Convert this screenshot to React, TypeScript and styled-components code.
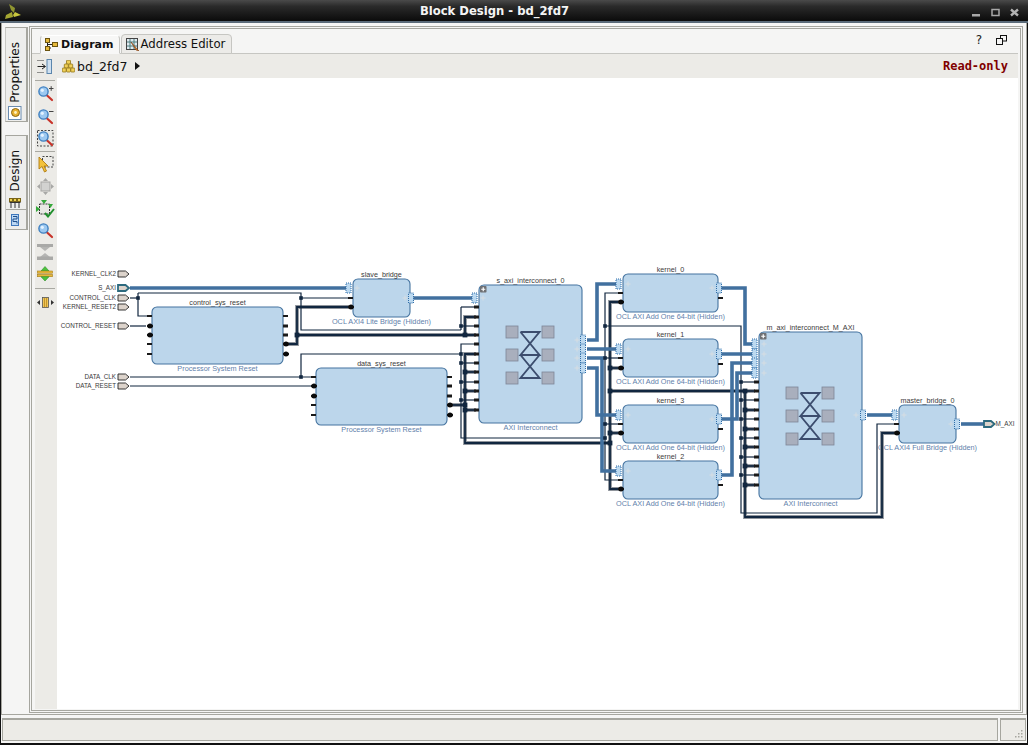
import React from "react";
import styled, { createGlobalStyle } from "styled-components";

const Global = createGlobalStyle`
  html, body { margin: 0; padding: 0; width: 1028px; height: 745px; overflow: hidden; background: #000; }
  #root { width: 1028px; height: 745px; }
`;

const Window = styled.div`
  box-sizing: border-box; width: 1028px; height: 745px; display: flex; flex-direction: column;
  background: #f5f5f4; border: 1px solid #111; border-top: 0; border-bottom-width: 2px;
  font-family: "DejaVu Sans", sans-serif; color: #111;
`;
const TitleBar = styled.div`
  position: relative; flex: none; height: 21px; margin: 0 -1px; display: flex; align-items: center; justify-content: center;
  background: linear-gradient(#4a4a4a 0, #2a2a2a 30%, #0b0b0b 100%);
  border-bottom: 2px solid #5a6a78;
`;
const TitleText = styled.span`
  color: #f4f4f4; font-size: 11.6px; font-weight: 700; padding-right: 39px;
`;
const LogoSlot = styled.div` position: absolute; left: 4px; top: 2px; width: 18px; height: 18px; `;
const WinControls = styled.div`
  position: absolute; right: 6px; top: 4px; display: flex; gap: 5px;
`;
const Workspace = styled.div`
  flex: none; height: 692px; box-sizing: border-box; display: flex; gap: 1px;
  padding: 3px 3px 1px 3px; border: 1px solid #a6a69f; border-top: 0;
`;
const SideColumn = styled.div`
  flex: none; width: 23px; display: flex; flex-direction: column; gap: 13px; padding-top: 1px;
`;
const SideGroup = styled.div`
  border: 1px solid #a6a69f; border-right-width: 2px; border-left: 1px solid #c8c8c4; background: #eeeeec; display: flex; flex-direction: column;
`;
const SideTab = styled.div<{ $h: number; $pad: number; $gap: number }>`
  height: ${(p) => p.$h}px; box-sizing: border-box; padding-top: ${(p) => p.$pad}px; padding-right: 2px; display: flex; flex-direction: column; align-items: center; gap: ${(p) => p.$gap}px;
`;
const SideIconCell = styled.div`
  height: 20px; box-sizing: border-box; border-top: 1px solid #a6a69f; padding-right: 2px; display: flex; align-items: center; justify-content: center;
`;
const VerticalLabel = styled.span`
  writing-mode: vertical-rl; transform: rotate(180deg); font-size: 12px; line-height: 14px;
`;
const MainPanel = styled.div`
  flex: 1; min-width: 0; box-sizing: border-box; border: 3px double #a6a69f; display: flex; flex-direction: column; padding: 0 2px 1px 0;
`;
const TabRow = styled.div`
  flex: none; height: 25px; box-sizing: border-box; display: flex; align-items: flex-end; gap: 1px; padding-left: 8px;
  border-bottom: 1px solid #c6c6c2; position: relative;
`;
const Tab = styled.div<{ $active?: boolean }>`
  box-sizing: border-box; height: ${(p) => (p.$active ? 19 : 20)}px; margin-bottom: -1px; display: flex; align-items: center; gap: ${(p) => (p.$active ? 3 : 2)}px;
  padding: 0 ${(p) => (p.$active ? 5 : 6)}px 0 4px; font-size: ${(p) => (p.$active ? 11 : 11.7)}px; font-weight: ${(p) => (p.$active ? 700 : 400)};
  background: ${(p) => (p.$active ? "#f7f7f6" : "#ecebe8")};
  border: 1px solid #c6c6c2; border-bottom-color: ${(p) => (p.$active ? "#f7f7f6" : "#c6c6c2")}; border-radius: 4px 4px 0 0;
  border-top-color: ${(p) => (p.$active ? "#fff" : "#c6c6c2")};
`;
const TabTools = styled.div`
  position: absolute; right: 11px; top: 4px; display: flex; align-items: center; gap: 14px; font-size: 12px; color: #222;
`;
const Breadcrumb = styled.div`
  flex: none; height: 24px; display: flex; align-items: center; background: #ecebe7; padding-left: 5px; padding-right: 10px;
`;
const CrumbIconWrap = styled.div` width: 25px; display: flex; `;
const CrumbText = styled.span` font-size: 12.5px; margin: 0 5px 0 2px; `;
const CrumbArrow = styled.span`
  width: 0; height: 0; border-left: 5px solid #111; border-top: 4px solid transparent; border-bottom: 4px solid transparent; margin-left: 3px;
`;
const ReadOnly = styled.span`
  margin-left: auto; font-family: "DejaVu Sans Mono", monospace; font-weight: 700; font-size: 12px; color: #800000;
`;
const WorkRow = styled.div` flex: 1; min-height: 0; display: flex; padding-left: 3px; `;
const ToolColumn = styled.div`
  flex: none; width: 22px; box-sizing: border-box; padding: 2px 2px 0 0; background: #ecebe7; display: flex; flex-direction: column; align-items: center;
`;
const ToolIcon = styled.div<{ $h?: number }>`
  height: ${(p) => p.$h ?? 22.5}px; display: flex; align-items: center; justify-content: center; flex: none;
`;
const ToolSep = styled.div<{ $my: number }>`
  flex: none; width: 20px; height: 1px; background: #a9a9a3; margin: ${(p) => p.$my}px 0;
`;
const Canvas = styled.div` flex: 1; min-width: 0; background: #fff; overflow: hidden; `;
const DiagramSvg = styled.svg` display: block; `;
const StatusRow = styled.div`
  flex: 1; min-height: 0; display: flex; gap: 2px; padding: 3px 1px 2px 1px; box-sizing: border-box;
`;
const StatusCell = styled.div<{ $w?: number }>`
  box-sizing: border-box; position: relative; background: #ecebe7; border: 1px solid #a6a69f; border-top-width: 2px; border-bottom-width: 1px;
  ${(p) => (p.$w ? `width: ${p.$w}px; flex: none;` : "flex: 1;")}
`;
const Grip = styled.svg` position: absolute; right: 1px; bottom: 1px; `;

/* diagram text */
const BlockTitle = styled.text`
  font-family: "Liberation Sans", sans-serif; font-size: 7.2px; fill: #3a3a3a; text-anchor: middle;
`;
const BlockSub = styled.text`
  font-family: "Liberation Sans", sans-serif; font-size: 7.3px; fill: #5f81ab; text-anchor: middle;
`;
const PortLabel = styled.text<{ $end?: boolean }>`
  font-family: "Liberation Sans", sans-serif; font-size: 6.3px; fill: #3a3a3a; text-anchor: ${(p) => (p.$end ? "end" : "start")};
`;
const BlockBody = styled.rect`
  fill: #bcd6eb; stroke: #44739f; stroke-width: 1.1;
`;
const Wire = styled.polyline<{ $kind: "thin" | "bus" | "halo" | "core" }>`
  fill: none;
  stroke: ${(p) => ({ thin: "#11263f", bus: "#41709f", halo: "#8f949b", core: "#11263f" }[p.$kind])};
  stroke-width: ${(p) => ({ thin: 1.2, bus: 3.6, halo: 3.8, core: 1.8 }[p.$kind])};
`;
const NodeDot = styled.rect` fill: #11263f; `;
const PinLine = styled.rect` fill: #1a1a1a; `;
const PinRound = styled.circle` fill: #0a0a0a; `;

type Pt = [number, number];
const pts = (a: Pt[]) => a.map((p) => p.join(",")).join(" ");

const thin: Pt[][] = [
  [[130, 298], [138, 298]],
  [[138, 293], [301, 293], [301, 330], [461, 330]],
  [[138, 293], [138, 316], [148, 316]],
  [[301, 298], [349, 298]],
  [[461, 307], [461, 330]],
  [[461, 307], [476, 307]],
  [[461, 326], [476, 326]],
  [[130, 326], [146, 326]],
  [[130, 377], [312, 377]],
  [[130, 386], [311, 386]],
  [[301, 377], [301, 354], [461, 354]],
  [[476, 344], [461, 344], [461, 438], [605, 438]],
  [[461, 363], [476, 363]],
  [[461, 382], [476, 382]],
  [[461, 400], [476, 400]],
  [[620, 293], [605, 293], [605, 480], [620, 480]],
  [[605, 358], [620, 358]],
  [[605, 424], [620, 424]],
  [[605, 326], [741, 326], [741, 513], [877, 513], [877, 424], [895, 424]],
  ...[382, 400, 419, 438, 457, 475].map((y): Pt[] => [[741, y], [755, y]]),
];
const thick: Pt[][] = [
  [[283, 344], [297, 344], [297, 307], [349, 307]],
  [[297, 335], [476, 335]],
  [[476, 317], [465, 317], [465, 335]],
  [[476, 354], [465, 354], [465, 443], [610, 443]],
  [[447, 405], [465, 405]],
  ...[372, 391, 410].map((y): Pt[] => [[465, y], [476, y]]),
  [[620, 302], [610, 302], [610, 489], [620, 489]],
  [[610, 368], [620, 368]],
  [[610, 433], [620, 433]],
  [[610, 391], [745, 391], [745, 517], [882, 517], [882, 433], [895, 433]],
  ...[410, 429, 447, 466, 485].map((y): Pt[] => [[745, y], [755, y]]),
  [[745, 391], [755, 391]],
];
const bus: Pt[][] = [
  [[130, 288], [350, 288]],
  [[413, 298], [476, 298]],
  [[587, 340], [597, 340], [597, 284], [620, 284]],
  [[587, 349], [620, 349]],
  [[587, 358], [602, 358], [602, 471], [620, 471]],
  [[587, 368], [597, 368], [597, 415], [620, 415]],
  [[721, 288], [745, 288], [745, 344], [755, 344]],
  [[721, 354], [755, 354]],
  [[721, 419], [737, 419], [737, 373], [755, 373]],
  [[721, 475], [732, 475], [732, 363], [755, 363]],
  [[867, 415], [895, 415]],
  [[961, 424], [985, 424]],
];
const thinNodes: Pt[] = [
  [138, 298], [301, 298], [301, 377], [461, 326], [461, 354], [461, 363], [461, 382], [461, 400],
  [605, 326], [605, 358], [605, 424], [605, 438],
  [741, 382], [741, 400], [741, 419], [741, 438], [741, 457], [741, 475],
];
const thickNodes: Pt[] = [
  [297, 335], [465, 335], [465, 372], [465, 391], [465, 405], [465, 410],
  [610, 368], [610, 391], [610, 433], [610, 443],
  [745, 391], [745, 410], [745, 429], [745, 447], [745, 466], [745, 485],
];

type Pin = [number, number, "l" | "t" | "r"];
const pins: Pin[] = [
  [147, 316, "l"], [147, 326, "r"], [147, 335, "r"], [147, 344, "l"], [147, 354, "l"],
  [283, 316, "l"], [283, 326, "t"], [283, 335, "t"], [283, 344, "r"], [283, 354, "r"],
  [311, 377, "l"], [311, 386, "r"], [311, 396, "r"], [311, 405, "l"], [311, 415, "l"],
  [447, 377, "l"], [447, 386, "t"], [447, 396, "t"], [447, 405, "r"], [447, 415, "r"],
  [348, 298, "l"], [348, 307, "r"],
  ...[307, 317, 326, 335, 344, 354, 363, 372, 382, 391, 400, 410].map((y): Pin => [474, y, "t"]),
  [618, 293, "l"], [618, 302, "r"], [718, 298, "l"],
  [618, 358, "l"], [618, 368, "r"], [718, 364, "l"],
  [618, 424, "l"], [618, 433, "r"], [718, 429, "l"],
  [618, 480, "l"], [618, 489, "r"], [718, 485, "l"],
  ...[382, 391, 400, 410, 419, 429, 438, 447, 457, 466, 475, 485].map((y): Pin => [754, y, "t"]),
  [894, 424, "l"], [894, 433, "r"],
];
const busPorts: Pt[] = [
  [348.5, 288], [411, 298], [474.5, 298], [583, 340], [583, 349], [583, 358], [583, 368],
  [618.5, 284], [719, 288], [618.5, 349], [719, 354], [618.5, 415], [719, 419], [618.5, 471], [719, 475],
  [754.5, 344], [754.5, 354], [754.5, 363], [754.5, 373], [863, 415], [894.5, 415], [957, 424],
];
const plusMarks: Pt[] = [
  [357, 288], [405, 298], [483, 298], [577, 340], [577, 349], [577, 358], [577, 368],
  [628, 284], [712, 288], [628, 349], [712, 354], [628, 415], [712, 419], [628, 471], [712, 475],
  [764, 344], [764, 354], [764, 363], [764, 373], [856, 415], [904, 415], [951, 424],
];
const blocks = [
  { x: 152, y: 307, w: 131, h: 57, title: "control_sys_reset", sub: "Processor System Reset" },
  { x: 353, y: 279, w: 57, h: 38, title: "slave_bridge", sub: "OCL AXI4 Lite Bridge (Hidden)" },
  { x: 316, y: 368, w: 131, h: 57, title: "data_sys_reset", sub: "Processor System Reset" },
  { x: 479, y: 285, w: 103, h: 138, title: "s_axi_interconnect_0", sub: "AXI Interconnect" },
  { x: 623, y: 274, w: 95, h: 38, title: "kernel_0", sub: "OCL AXI Add One 64-bit (Hidden)" },
  { x: 623, y: 339, w: 95, h: 38, title: "kernel_1", sub: "OCL AXI Add One 64-bit (Hidden)" },
  { x: 623, y: 405, w: 95, h: 38, title: "kernel_3", sub: "OCL AXI Add One 64-bit (Hidden)" },
  { x: 623, y: 461, w: 95, h: 38, title: "kernel_2", sub: "OCL AXI Add One 64-bit (Hidden)" },
  { x: 759, y: 332, w: 103, h: 167, title: "m_axi_interconnect_M_AXI", sub: "AXI Interconnect" },
  { x: 899, y: 405, w: 57, h: 38, title: "master_bridge_0", sub: "OCL AXI4 Full Bridge (Hidden)" },
];
const extPorts: { y: number; label: string; bus?: boolean }[] = [
  { y: 274, label: "KERNEL_CLK2" },
  { y: 288, label: "S_AXI", bus: true },
  { y: 298, label: "CONTROL_CLK" },
  { y: 307, label: "KERNEL_RESET2" },
  { y: 326, label: "CONTROL_RESET" },
  { y: 377, label: "DATA_CLK" },
  { y: 386, label: "DATA_RESET" },
];

const Crossbar = ({ x, cy }: { x: number; cy: number }) => (
  <g>
    {[-24, 12].map((dx) =>
      [-23, 0, 23].map((dy) => (
        <rect key={`${dx}${dy}`} x={x + dx} y={cy + dy - 6} width={12} height={12} fill="#a9afbd" stroke="#7d8597" strokeWidth={0.8} />
      ))
    )}
    <path
      d={`M${x - 9.5} ${cy - 23}H${x + 9.5}L${x - 9.5} ${cy}H${x + 9.5}L${x - 9.5} ${cy - 23}M${x - 9.5} ${cy}L${x + 9.5} ${cy + 23}H${x - 9.5}L${x + 9.5} ${cy}`}
      fill="none" stroke="#3c4d6e" strokeWidth={1.9}
    />
  </g>
);

const Expand = ({ x, y }: { x: number; y: number }) => (
  <g>
    <rect x={x} y={y} width={6.5} height={6.5} rx={0.8} fill="#6f7174" />
    <path d={`M${x + 3.25} ${y + 1.2}V${y + 5.3}M${x + 1.2} ${y + 3.25}H${x + 5.3}`} stroke="#fff" strokeWidth={1.2} />
  </g>
);

const Diagram = () => (
  <DiagramSvg width={963} height={631} viewBox="57 78 963 631">
    {blocks.map((b) => (
      <g key={b.title}>
        <BlockBody x={b.x} y={b.y} width={b.w} height={b.h} rx={5} />
        <BlockTitle x={b.x + b.w / 2} y={b.y - 2}>{b.title}</BlockTitle>
        <BlockSub x={b.x + b.w / 2} y={b.y + b.h + 6.5}>{b.sub}</BlockSub>
      </g>
    ))}
    <Crossbar x={530} cy={355} />
    <Crossbar x={810} cy={416} />
    <Expand x={480} y={286} />
    <Expand x={760} y={333} />
    {plusMarks.map(([x, y]) => (
      <path key={`${x}-${y}`} d={`M${x - 2.5} ${y}H${x + 2.5}M${x} ${y - 2.5}V${y + 2.5}`} stroke="#d6dde2" strokeWidth={1} />
    ))}
    {thick.map((w, i) => <Wire key={`h${i}`} $kind="halo" points={pts(w)} />)}
    {thick.map((w, i) => <Wire key={`c${i}`} $kind="core" points={pts(w)} />)}
    {thin.map((w, i) => <Wire key={`t${i}`} $kind="thin" points={pts(w)} />)}
    {bus.map((w, i) => <Wire key={`b${i}`} $kind="bus" points={pts(w)} />)}
    {thinNodes.map(([x, y]) => <NodeDot key={`n${x}-${y}`} x={x - 1.8} y={y - 1.8} width={3.6} height={3.6} />)}
    {thickNodes.map(([x, y]) => <NodeDot key={`m${x}-${y}`} x={x - 2.4} y={y - 2.4} width={4.8} height={4.8} />)}
    {pins.map(([x, y, k]) => (
      <g key={`p${x}-${y}`}>
        {k === "l" && <PinLine x={x} y={y - 1} width={5} height={2} />}
        {k === "t" && <PinLine x={x} y={y - 1.5} width={5} height={3} />}
        {k === "r" && (
          <>
            <PinLine x={x} y={y - 1.2} width={6} height={2.4} />
            <PinRound cx={x + 3} cy={y} r={2.5} />
          </>
        )}
      </g>
    ))}
    {busPorts.map(([x, y]) => (
      <rect key={`s${x}-${y}`} x={x - 2.5} y={y - 5} width={5} height={10} fill="#bcd9f0" stroke="#2f6da8" strokeWidth={1} strokeDasharray="1 1" />
    ))}
    {extPorts.map((p) => (
      <g key={p.label}>
        <polygon
          points={`${118},${p.y - 3} ${125.5},${p.y - 3} ${129},${p.y} ${125.5},${p.y + 3} ${118},${p.y + 3}`}
          fill="#dcd3cb" stroke={p.bus ? "#2d6a7e" : "#222"} strokeWidth={p.bus ? 1.8 : 0.9}
        />
        <PortLabel $end x={116} y={p.y + 2.3}>{p.label}</PortLabel>
      </g>
    ))}
    <polygon points="984,421 991,421 994.5,424 991,427 984,427" fill="#dcd3cb" stroke="#2d6a7e" strokeWidth={1.8} />
    <PortLabel x={995.5} y={426.3}>M_AXI</PortLabel>
  </DiagramSvg>
);

/* icons */
const Logo = () => (
  <svg width="18" height="18" viewBox="0 0 18 18">
    <path d="M5 2L11 6L10 11L7 8Z" fill="#8f9530" />
    <path d="M11 10L17 13L10 15L9 13Z" fill="#c8c63e" />
    <path d="M8 10L9 15L1 17L2 13Z" fill="#a4a632" />
  </svg>
);
const Magnifier = ({ mark }: { mark?: "+" | "-" | "box" }) => (
  <svg width="17" height="17" viewBox="0 0 17 17">
    {mark === "box" && <rect x="0.5" y="0.5" width="15.5" height="15.5" fill="#e8e8e4" stroke="#444" strokeDasharray="2 1.5" />}
    <path d="M9 9.5L15 15" stroke="#c8332a" strokeWidth="2.2" strokeLinecap="round" />
    <circle cx="6.5" cy="6.5" r="4.6" fill="#9cc8f0" stroke="#3d7fc0" strokeWidth="1.4" />
    <circle cx="5.3" cy="5.3" r="1.6" fill="#e4f2ff" />
    {mark === "+" && <path d="M12 3.5H16.5M14.2 1.2V5.8" stroke="#444" strokeWidth="1" />}
    {mark === "-" && <path d="M12 3.5H16.5" stroke="#444" strokeWidth="1" />}
  </svg>
);
const CollapseIcon = () => (
  <svg width="15" height="15" viewBox="0 0 15 15">
    <path d="M0.5 1.5H7M0.5 13.5H7" stroke="#333" strokeDasharray="1 1" />
    <path d="M0.5 7.5H8M5 5L8.5 7.5L5 10" fill="none" stroke="#222" strokeWidth="1" />
    <rect x="10" y="0.5" width="4.5" height="14" fill="#cfe0f0" stroke="#5b86ad" />
  </svg>
);
const SelectIcon = () => (
  <svg width="17" height="17" viewBox="0 0 17 17">
    <rect x="5.5" y="0.5" width="10.5" height="10.5" fill="none" stroke="#444" strokeDasharray="2 1.5" />
    <path d="M2 1V13L5 10.5L7.5 16L9.5 15L7 10H11Z" fill="#f3c23c" stroke="#b07c12" strokeWidth="0.9" />
  </svg>
);
const MoveGreyIcon = () => (
  <svg width="17" height="17" viewBox="0 0 17 17">
    <rect x="4" y="4" width="9" height="9" fill="#d2d2d0" stroke="#a5a5a3" />
    <path d="M8.5 0L11 3H6ZM8.5 17L6 14H11ZM0 8.5L3 6V11ZM17 8.5L14 11V6Z" fill="#a8a8a6" />
  </svg>
);
const RegenIcon = () => (
  <svg width="19" height="18" viewBox="0 0 19 18">
    <rect x="3.5" y="4" width="10" height="10" fill="#e8e8e4" stroke="#333" strokeDasharray="2 1" />
    <path d="M5 0L11 0L8 4ZM0 6L4 9L0 12ZM12 4L17 4L14.5 8Z" fill="#35a83a" />
    <path d="M9 13L12 16.5L18 9" fill="none" stroke="#1f8f2c" strokeWidth="2" />
  </svg>
);
const AlignGreyIcon = () => (
  <svg width="16" height="16" viewBox="0 0 16 16">
    <rect x="0" y="0" width="16" height="3" fill="#a9a9a7" />
    <path d="M3 3H13L8 7ZM3 13H13L8 9Z" fill="#b5b5b3" />
    <rect x="0" y="12.5" width="16" height="3.5" fill="#a9a9a7" />
  </svg>
);
const ExpandYellowIcon = () => (
  <svg width="16" height="17" viewBox="0 0 16 17">
    <path d="M4 6L8 1.5L12 6Z" fill="#4cc23c" stroke="#2f8f2a" strokeWidth="0.6" />
    <rect x="0.5" y="6" width="15" height="2.2" fill="#e8b93a" stroke="#a57c16" strokeWidth="0.6" />
    <rect x="0.5" y="9.5" width="15" height="2.2" fill="#e8b93a" stroke="#a57c16" strokeWidth="0.6" />
    <path d="M4 11.7L8 16L12 11.7Z" fill="#4cc23c" stroke="#2f8f2a" strokeWidth="0.6" />
  </svg>
);
const ColumnIcon = () => (
  <svg width="17" height="11" viewBox="0 0 17 11">
    <rect x="5.5" y="0.5" width="6" height="10" fill="#efc65a" stroke="#555" strokeWidth="0.8" />
    <path d="M7.5 1V10M9.5 1V10" stroke="#b98a1e" strokeWidth="0.8" />
    <path d="M0 5.5L3 3V8ZM17 5.5L14 8V3Z" fill="#333" />
  </svg>
);
const PyramidIcon = () => (
  <svg width="13" height="13" viewBox="0 0 13 13">
    {[[6.5, 2.2], [4.3, 6], [8.7, 6], [2.2, 10], [6.5, 10], [10.8, 10]].map(([x, y]) => (
      <rect key={`${x}${y}`} x={x - 2} y={y - 2} width="4" height="4" rx="0.8" fill="#efcf58" stroke="#8f7418" strokeWidth="0.8" />
    ))}
  </svg>
);
const DiagramTabIcon = () => (
  <svg width="13" height="13" viewBox="0 0 13 13">
    <path d="M2.5 3V10H6M2.5 6.5H8" stroke="#222" fill="none" />
    <rect x="0.5" y="0.5" width="4" height="4" fill="#e6b93c" stroke="#6b5410" />
    <rect x="7.5" y="4.5" width="5" height="4" fill="#e6b93c" stroke="#6b5410" />
    <rect x="0.5" y="8.5" width="4" height="4" fill="#e6b93c" stroke="#6b5410" />
  </svg>
);
const AddressTabIcon = () => (
  <svg width="13" height="13" viewBox="0 0 13 13">
    <rect x="0.5" y="0.5" width="11" height="11" fill="#dfe8ee" stroke="#444" />
    <path d="M4 1V11M8 1V11M1 4H11M1 8H11" stroke="#4a7d7d" />
    <path d="M5 4L11 11L13 13L10 12Z" fill="#e8832c" stroke="#7a3a10" strokeWidth="0.6" />
  </svg>
);
const PropsIcon = () => (
  <svg width="14" height="14" viewBox="0 0 14 14">
    <rect x="0.5" y="0.5" width="12.5" height="13" fill="#fff" stroke="#6a8cb0" />
    <circle cx="7.5" cy="6.5" r="4" fill="#e8b130" stroke="#8a6412" />
    <circle cx="7.5" cy="6.5" r="1.4" fill="#fff3c4" />
  </svg>
);
const HierarchyIcon = () => (
  <svg width="12" height="10" viewBox="0 0 12 10">
    <path d="M0.5 4.5H11.5M2 4.5V10M6 4.5V10M10 4.5V10" stroke="#333" />
    <rect x="0.5" y="0.5" width="3" height="3" fill="#eed24e" stroke="#7a6418" />
    <rect x="4.5" y="0.5" width="3" height="3" fill="#eed24e" stroke="#7a6418" />
    <rect x="8.5" y="0.5" width="3" height="3" fill="#eed24e" stroke="#7a6418" />
  </svg>
);
const NetlistIcon = () => (
  <svg width="8" height="12" viewBox="0 0 8 12">
    <rect x="0.5" y="0.5" width="7" height="11" fill="#bcd8f4" stroke="#3f78bc" />
    <path d="M2 2.5H6V5H2V7.5H6V9.5" fill="none" stroke="#1e4f8c" />
  </svg>
);
const WinMin = () => (
  <svg width="14" height="14" viewBox="0 0 14 14"><rect x="2" y="10" width="8" height="2.5" fill="#a8a8a8" /></svg>
);
const WinMax = () => (
  <svg width="14" height="14" viewBox="0 0 14 14"><rect x="3" y="5.5" width="7" height="6" fill="none" stroke="#a8a8a8" strokeWidth="1.5" /></svg>
);
const WinClose = () => (
  <svg width="14" height="14" viewBox="0 0 14 14"><path d="M3 5.5L10 11.5M10 5.5L3 11.5" stroke="#b4b4b4" strokeWidth="2.4" /></svg>
);
const RestoreIcon = () => (
  <svg width="11" height="10" viewBox="0 0 11 10">
    <rect x="4.5" y="0.5" width="6" height="5.5" fill="none" stroke="#111" />
    <rect x="0.5" y="3.5" width="6" height="6" fill="#f5f5f4" stroke="#111" />
  </svg>
);

export default function App() {
  return (
    <>
      <Global />
      <Window>
        <TitleBar>
          <LogoSlot><Logo /></LogoSlot>
          <TitleText>Block Design - bd_2fd7</TitleText>
          <WinControls><WinMin /><WinMax /><WinClose /></WinControls>
        </TitleBar>
        <Workspace>
          <SideColumn>
            <SideGroup>
              <SideTab $h={93} $pad={14} $gap={3}>
                <VerticalLabel>Properties</VerticalLabel>
                <PropsIcon />
              </SideTab>
            </SideGroup>
            <SideGroup>
              <SideTab $h={73} $pad={14} $gap={7}>
                <VerticalLabel>Design</VerticalLabel>
                <HierarchyIcon />
              </SideTab>
              <SideIconCell><NetlistIcon /></SideIconCell>
            </SideGroup>
          </SideColumn>
          <MainPanel>
            <TabRow>
              <Tab $active><DiagramTabIcon />Diagram</Tab>
              <Tab><AddressTabIcon />Address Editor</Tab>
              <TabTools><span>?</span><RestoreIcon /></TabTools>
            </TabRow>
            <Breadcrumb>
              <CrumbIconWrap><CollapseIcon /></CrumbIconWrap>
              <PyramidIcon />
              <CrumbText>bd_2fd7</CrumbText>
              <CrumbArrow />
              <ReadOnly>Read-only</ReadOnly>
            </Breadcrumb>
            <WorkRow>
              <ToolColumn>
                <ToolSep $my={0} />
                <ToolIcon $h={24}><Magnifier mark="+" /></ToolIcon>
                <ToolIcon><Magnifier mark="-" /></ToolIcon>
                <ToolIcon><Magnifier mark="box" /></ToolIcon>
                <ToolSep $my={1} />
                <ToolIcon $h={22}><SelectIcon /></ToolIcon>
                <ToolIcon><MoveGreyIcon /></ToolIcon>
                <ToolIcon $h={22}><RegenIcon /></ToolIcon>
                <ToolIcon $h={21}><Magnifier /></ToolIcon>
                <ToolIcon $h={22}><AlignGreyIcon /></ToolIcon>
                <ToolIcon $h={22}><ExpandYellowIcon /></ToolIcon>
                <ToolSep $my={3} />
                <ToolIcon $h={21}><ColumnIcon /></ToolIcon>
              </ToolColumn>
              <Canvas><Diagram /></Canvas>
            </WorkRow>
          </MainPanel>
        </Workspace>
        <StatusRow>
          <StatusCell />
          <StatusCell $w={26}>
            <Grip width="12" height="12" viewBox="0 0 12 12">
              {[[9, 1], [9, 4], [6, 4], [9, 7], [6, 7], [3, 7]].map(([x, y]) => (
                <rect key={`${x}${y}`} x={x} y={y + 2} width="1.5" height="1.5" fill="#a6a69f" />
              ))}
            </Grip>
          </StatusCell>
        </StatusRow>
      </Window>
    </>
  );
}
